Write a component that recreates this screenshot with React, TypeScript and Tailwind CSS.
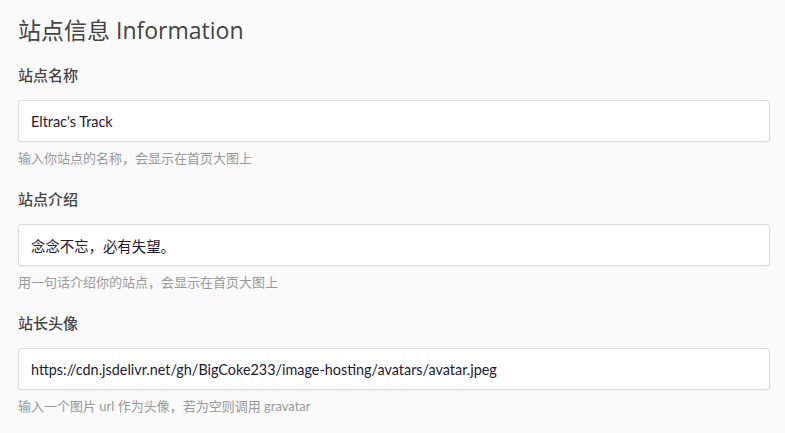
const fields = [
  {
    label: "站点名称",
    value: "Eltrac's Track",
    help: "输入你站点的名称，会显示在首页大图上",
  },
  {
    label: "站点介绍",
    value: "念念不忘，必有失望。",
    help: "用一句话介绍你的站点，会显示在首页大图上",
  },
  {
    label: "站长头像",
    value: "https://cdn.jsdelivr.net/gh/BigCoke233/image-hosting/avatars/avatar.jpeg",
    help: "输入一个图片 url 作为头像，若为空则调用 gravatar",
  },
];

export default function App() {
  return (
    <div
      className="min-h-[433px] w-[785px] bg-[#fafafa] pl-[18px] pr-[15px] pt-[14px]"
      style={{ fontFamily: 'Lato, "Noto Sans CJK SC", sans-serif' }}
    >
      <h2
        className="text-[23px] leading-[32px] text-[#444] font-normal"
        style={{ fontFamily: '"Open Sans", "Noto Sans CJK SC", sans-serif' }}
      >
        站点信息 Information
      </h2>

      {fields.map((field, idx) => (
        <div key={idx} className={idx === 0 ? "mt-[19px]" : "mt-[22px]"}>
          <label className="block text-[15px] leading-[20px] font-medium text-[#444]">
            {field.label}
          </label>
          <input
            readOnly
            value={field.value}
            className="mt-[15px] block h-[42px] w-full rounded-[3px] border border-[#dcdcdc] bg-white px-[12px] text-[14.4px] text-[#221a35] shadow-[0_1px_2px_rgba(0,0,0,0.06)] outline-none"
          />
          <p className="mt-[7px] text-[13px] leading-[18px] text-[#999]">
            {field.help}
          </p>
        </div>
      ))}
    </div>
  );
}
